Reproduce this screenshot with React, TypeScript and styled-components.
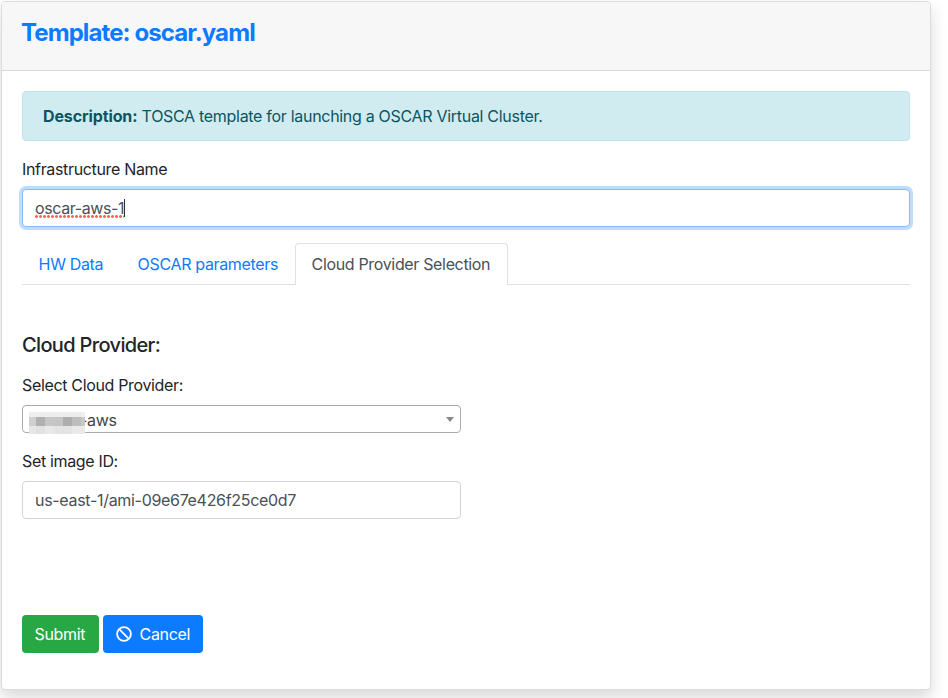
import React from 'react';
import styled, { createGlobalStyle } from 'styled-components';

const GlobalStyle = createGlobalStyle`
  *, *::before, *::after { box-sizing: border-box; }
  body {
    margin: 0;
    background: #fff;
    color: #212529;
    font: 400 16px/24px Inter, "Liberation Sans", sans-serif;
    letter-spacing: -0.34px;
  }
`;

const Page = styled.div`
  height: 698px;
  padding: 1px 0 0 1px;
  overflow: hidden;
`;

const Card = styled.main`
  width: 930px;
  height: 689px;
  background: #fff;
  border: 1px solid #dcdcdc;
  border-radius: 4px;
  box-shadow: 0 8px 16px rgba(0, 0, 0, 0.15);
`;

const CardHeader = styled.header`
  height: 69px;
  padding: 16px 20px 0 19px;
  background: #f7f7f7;
  border-bottom: 1px solid #d8d8d8;
  border-radius: 3px 3px 0 0;
`;

const Title = styled.h1`
  margin: 0;
  color: #0d7bff;
  font-size: 24px;
  font-weight: 700;
  line-height: 29px;
  letter-spacing: -0.9px;
  white-space: nowrap;
`;

const CardBody = styled.div`
  padding: 20px;
`;

const Alert = styled.div`
  height: 50px;
  padding: 12px 20px;
  margin-bottom: 16px;
  color: #0c5460;
  background: #d1ecf1;
  border: 1px solid #bee5eb;
  border-radius: 4px;
  letter-spacing: -0.3px;
  white-space: nowrap;

  strong {
    letter-spacing: -0.12px;
  }
`;

const Label = styled.label`
  display: block;
  margin-bottom: 8px;
  height: 24px;
`;

const Control = styled.div<{ $focused?: boolean }>`
  display: flex;
  align-items: center;
  height: 38px;
  padding: 0 12px;
  color: #495057;
  background: #fff;
  border: 1px solid ${p => (p.$focused ? '#80bdff' : '#ced4da')};
  border-radius: 4px;
  box-shadow: ${p => (p.$focused ? '0 0 0 3px rgba(0, 123, 255, 0.25)' : 'none')};
  letter-spacing: -0.31px;
`;

const Misspelled = styled.span`
  height: 24px;
  letter-spacing: -0.4px;
  background: radial-gradient(circle at 1.5px 1.5px, #f5645c 1.1px, transparent 1.7px) 0 19px / 4px 3px repeat-x;
`;

const Caret = styled.span`
  width: 1px;
  height: 18px;
  background: #333;
`;

const Tabs = styled.nav`
  display: flex;
  height: 42px;
  margin: 16px 0 48px;
  border-bottom: 1px solid #dee2e6;
`;

const Tab = styled.a<{ $width: number; $active?: boolean }>`
  width: ${p => p.$width}px;
  height: 42px;
  padding: 8px 0 0 15.6px;
  white-space: nowrap;
  color: ${p => (p.$active ? '#495057' : '#0d7bff')};
  background: ${p => (p.$active ? '#fff' : 'transparent')};
  border: 1px solid ${p => (p.$active ? '#dee2e6' : 'transparent')};
  border-bottom: 0;
  border-radius: 4px 4px 0 0;
`;

const SectionTitle = styled.h2`
  margin: 0 0 16px;
  font-size: 20px;
  font-weight: 500;
  line-height: 24px;
  letter-spacing: -0.65px;
`;

const Field = styled.div<{ $gap: number }>`
  width: 439px;
  margin-bottom: ${p => p.$gap}px;
`;

const Select = styled.div`
  display: flex;
  align-items: center;
  height: 28px;
  padding: 0 6px;
  color: #444;
  border: 1px solid #aaa;
  border-radius: 4px;
`;

/* Stacked above the value so it masks the start of the text. */
const Redaction = styled.svg`
  position: relative;
  z-index: 1;
  display: block;
  flex: none;
  width: 56px;
  height: 22px;
  margin-top: 7px;
`;

const SelectText = styled.span`
  flex: 1;
  margin-left: -5px;
  padding-top: 2px;
`;

const Arrow = styled.span`
  border: solid transparent;
  border-width: 5px 4px 0;
  border-top-color: #888;
`;

const Actions = styled.div`
  display: flex;
  gap: 4px;
`;

const Button = styled.button<{ $color: string; $width: number }>`
  display: flex;
  align-items: center;
  gap: 8px;
  width: ${p => p.$width}px;
  height: 38px;
  padding: 0 0 0 12.6px;
  color: #fff;
  background: ${p => p.$color};
  border: 0;
  border-radius: 4px;
  font: inherit;
  letter-spacing: -0.35px;
`;

const shades = [
  ['#eeeeee', '#eeeeee', '#ededed', '#eeeeee', '#ededed', '#ececec', '#f0f0f0'],
  ['#d0d0d0', '#b0b0b0', '#c6c6c6', '#c5c5c5', '#adadad', '#bdbdbd', '#c8c8c8'],
  ['#e6e6e6', '#e2e2e2', '#e8e8e8', '#e4e4e4', '#e3e3e3', '#e9e9e9', '#eaeaea'],
];
const rows = [[0, 5], [5, 9], [14, 8]];
const columns = [[0, 7], [7, 9], [16, 9], [25, 9], [34, 9], [43, 9], [52, 4]];

export default function App() {
  return (
    <Page>
      <GlobalStyle />
      <Card>
        <CardHeader>
          <Title>Template: oscar.yaml</Title>
        </CardHeader>
        <CardBody>
          <Alert>
            <strong>Description:</strong> TOSCA template for launching a OSCAR Virtual Cluster.
          </Alert>
          <Label>Infrastructure Name</Label>
          <Control $focused role="textbox">
            <Misspelled>oscar-aws-1</Misspelled>
            <Caret />
          </Control>
          <Tabs>
            <Tab $width={99}>HW Data</Tab>
            <Tab $width={174}>OSCAR parameters</Tab>
            <Tab $width={213} $active>Cloud Provider Selection</Tab>
          </Tabs>
          <SectionTitle>Cloud Provider:</SectionTitle>
          <Field $gap={16}>
            <Label>Select Cloud Provider:</Label>
            <Select>
              <Redaction viewBox="0 0 56 22" shapeRendering="crispEdges">
                {rows.map(([y, h], r) =>
                  columns.map(([x, w], c) => (
                    <rect key={`${r}-${c}`} x={x} y={y} width={w} height={h} fill={shades[r][c]} />
                  )),
                )}
              </Redaction>
              <SelectText>-aws</SelectText>
              <Arrow />
            </Select>
          </Field>
          <Field $gap={96}>
            <Label>Set image ID:</Label>
            <Control role="textbox">us-east-1/ami-09e67e426f25ce0d7</Control>
          </Field>
          <Actions>
            <Button $color="#28a745" $width={77}>Submit</Button>
            <Button $color="#0d7bff" $width={100}>
              <svg width="16" height="16" viewBox="0 0 16 16" fill="none" stroke="#fff" strokeWidth="1.8">
                <circle cx="8" cy="8" r="6.9" />
                <path d="M3.2 3.2 12.8 12.8" />
              </svg>
              Cancel
            </Button>
          </Actions>
        </CardBody>
      </Card>
    </Page>
  );
}
